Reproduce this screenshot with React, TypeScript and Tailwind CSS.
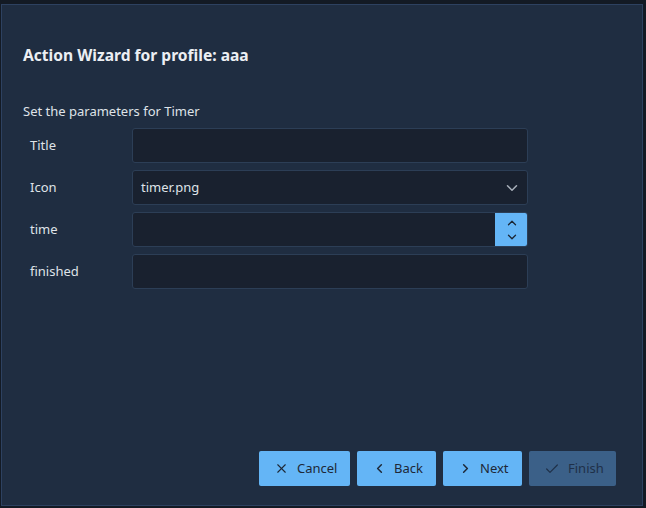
import React from 'react';
import { X, ChevronLeft, ChevronRight, Check, ChevronDown, ChevronUp } from 'lucide-react';

const fields = [
  { label: 'Title', kind: 'text', value: '' },
  { label: 'Icon', kind: 'select', value: 'timer.png' },
  { label: 'time', kind: 'spin', value: '' },
  { label: 'finished', kind: 'text', value: '' },
];

function Field({ kind, value }: { kind: string; value: string }) {
  if (kind === 'select') {
    return (
      <div className="flex h-[35px] w-[396px] items-center justify-between rounded-[3px] border border-[#2c3e56] bg-[#19212f] pl-[8px] pr-[6px] text-[#dfe3e8]">
        <span>{value}</span>
        <ChevronDown size={18} strokeWidth={2} className="text-[#a9b1bb]" />
      </div>
    );
  }
  if (kind === 'spin') {
    return (
      <div className="flex h-[35px] w-[396px] overflow-hidden rounded-[3px] border border-[#2c3e56] bg-[#19212f]">
        <div className="flex-1" />
        <div className="-my-px -mr-px flex w-[33px] flex-col items-center justify-center rounded-r-[3px] bg-[#64b5f6] text-[#1c2633]">
          <ChevronUp size={14} strokeWidth={2.2} />
          <ChevronDown size={14} strokeWidth={2.2} />
        </div>
      </div>
    );
  }
  return <div className="h-[35px] w-[396px] rounded-[3px] border border-[#2c3e56] bg-[#19212f]" />;
}

export default function App() {
  return (
    <div
      className="h-[508px] w-[646px] overflow-hidden bg-[#131a24] pl-[1px] pt-[4px] text-[13px]"
      style={{ fontFamily: '"Noto Sans", "Open Sans", sans-serif' }}
    >
      <div className="flex h-[502px] w-[642px] flex-col border border-[#2d4160] bg-[#1f2d41]">
        <div className="pl-[21px] pt-[40px] text-[15.6px] font-bold leading-[20px] text-[#eceff3]">
          Action Wizard for profile: aaa
        </div>
        <div className="mt-[37px] pl-[21px] leading-[18px] text-[#dfe3e8]">Set the parameters for Timer</div>

        <div className="mt-[8px] flex flex-col gap-[7px] pl-[28px]">
          {fields.map((f) => (
            <div key={f.label} className="flex items-center">
              <span className="w-[102px] text-[#dfe3e8]">{f.label}</span>
              <Field kind={f.kind} value={f.value} />
            </div>
          ))}
        </div>

        <div className="mt-auto flex justify-end gap-[7px] pb-[19px] pr-[26px]">
          <button className="flex h-[35px] w-[91px] items-center gap-[8px] rounded-[2px] bg-[#64b5f6] pl-[15px] text-[#1e2836]">
            <X size={15} strokeWidth={1.8} />
            Cancel
          </button>
          <button className="flex h-[35px] w-[79px] items-center gap-[7px] rounded-[2px] bg-[#64b5f6] pl-[15px] text-[#1e2836]">
            <ChevronLeft size={15} strokeWidth={2.4} />
            Back
          </button>
          <button className="flex h-[35px] w-[79px] items-center gap-[7px] rounded-[2px] bg-[#64b5f6] pl-[15px] text-[#1e2836]">
            <ChevronRight size={15} strokeWidth={2.4} />
            Next
          </button>
          <button className="flex h-[35px] w-[87px] items-center gap-[8px] rounded-[2px] bg-[#3b6088] pl-[15px] text-[#1f3048]">
            <Check size={16} strokeWidth={1.8} />
            Finish
          </button>
        </div>
      </div>
    </div>
  );
}
